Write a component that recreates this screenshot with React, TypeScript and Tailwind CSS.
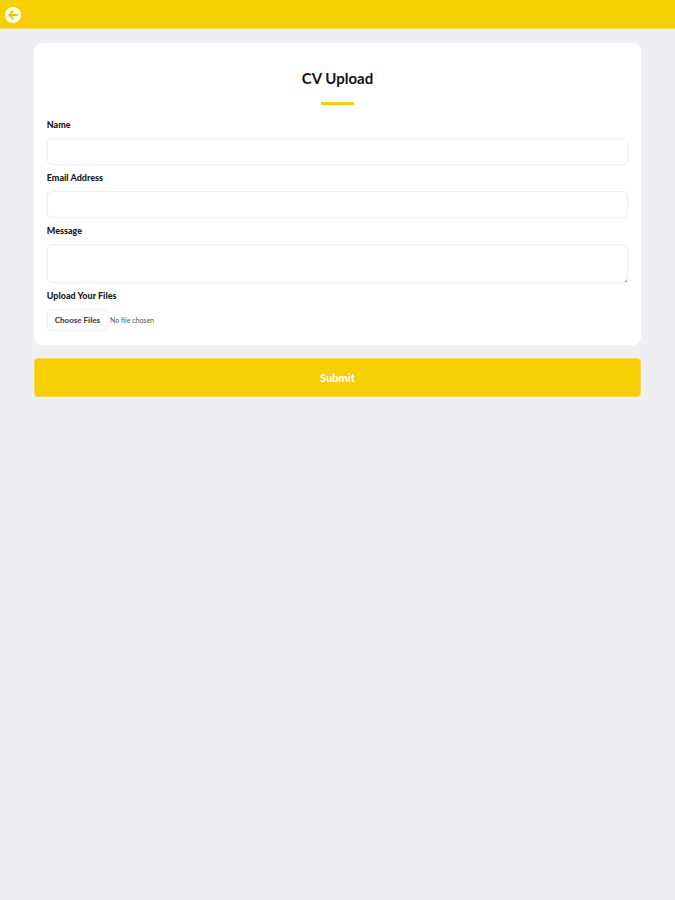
import type { ReactNode } from "react";

const fieldClass =
  "block w-full rounded-[5px] border border-[#ededef] bg-white px-2 text-[9px] text-[#222] outline-none focus:border-[#f6ce04]";

function Field({ id, label, children }: { id: string; label: string; children: ReactNode }) {
  return (
    <div className="flex flex-col gap-[7px]">
      <label htmlFor={id} className="text-[9px] leading-3 font-black text-[#1a1a1a]">
        {label}
      </label>
      {children}
    </div>
  );
}

function BackIcon() {
  return (
    <svg viewBox="0 0 16 16" className="size-4" aria-hidden="true">
      <circle cx="8" cy="8" r="8" fill="#fffdf0" />
      <path
        d="M12 8H4.5M8 4.2L4.2 8L8 11.8"
        fill="none"
        stroke="#ecc20a"
        strokeWidth="1.8"
        strokeLinecap="round"
        strokeLinejoin="round"
      />
    </svg>
  );
}

export default function App() {
  return (
    <div className="min-h-screen bg-[#eeeef3] font-['Lato',sans-serif]">
      <header className="flex h-[29px] items-center border-b border-[#f3dc6c] bg-[#f6ce04] px-[5px] pt-px">
        <button type="button" aria-label="Back" className="block">
          <BackIcon />
        </button>
      </header>

      <form className="mx-[5%] flex flex-col gap-[13px] pt-[14px]" onSubmit={(e) => e.preventDefault()}>
        <section className="flex flex-col gap-[7px] rounded-lg bg-white px-[13px] pt-[25px] pb-[14px]">
          <div className="mb-[7px] flex flex-col items-center gap-[14px]">
            <h1 className="text-[15px] leading-5 font-bold text-[#111]">CV Upload</h1>
            <div className="h-[3px] w-[33px] bg-[#f3c914]" />
          </div>

          <Field id="name" label="Name">
            <input id="name" type="text" className={`${fieldClass} h-[27px]`} />
          </Field>
          <Field id="email" label="Email Address">
            <input id="email" type="email" className={`${fieldClass} h-[27px]`} />
          </Field>
          <Field id="message" label="Message">
            <div className="relative">
              <textarea id="message" className={`${fieldClass} h-[39px] resize-none py-1`} />
              <svg viewBox="0 0 3 3" className="pointer-events-none absolute right-px bottom-px size-[3px]" aria-hidden="true">
                <path d="M3 0V3H0Z" fill="#aaa" />
              </svg>
            </div>
          </Field>
          <Field id="files" label="Upload Your Files">
            <input
              id="files"
              type="file"
              multiple
              className="block h-[22px] w-full text-[7px] leading-5 text-[#555] file:mr-[2px] file:h-[22px] file:rounded-[3px] file:border file:border-solid file:border-[#f0f0f2] file:bg-white file:px-[7px] file:text-[8px] file:leading-5 file:font-black file:text-[#444]"
            />
          </Field>
        </section>

        <button
          type="submit"
          className="h-[39px] w-full rounded-[4px] border border-[#f3d75a] bg-[#f6ce04] text-[11px] leading-4 font-black text-white"
        >
          Submit
        </button>
      </form>
    </div>
  );
}
